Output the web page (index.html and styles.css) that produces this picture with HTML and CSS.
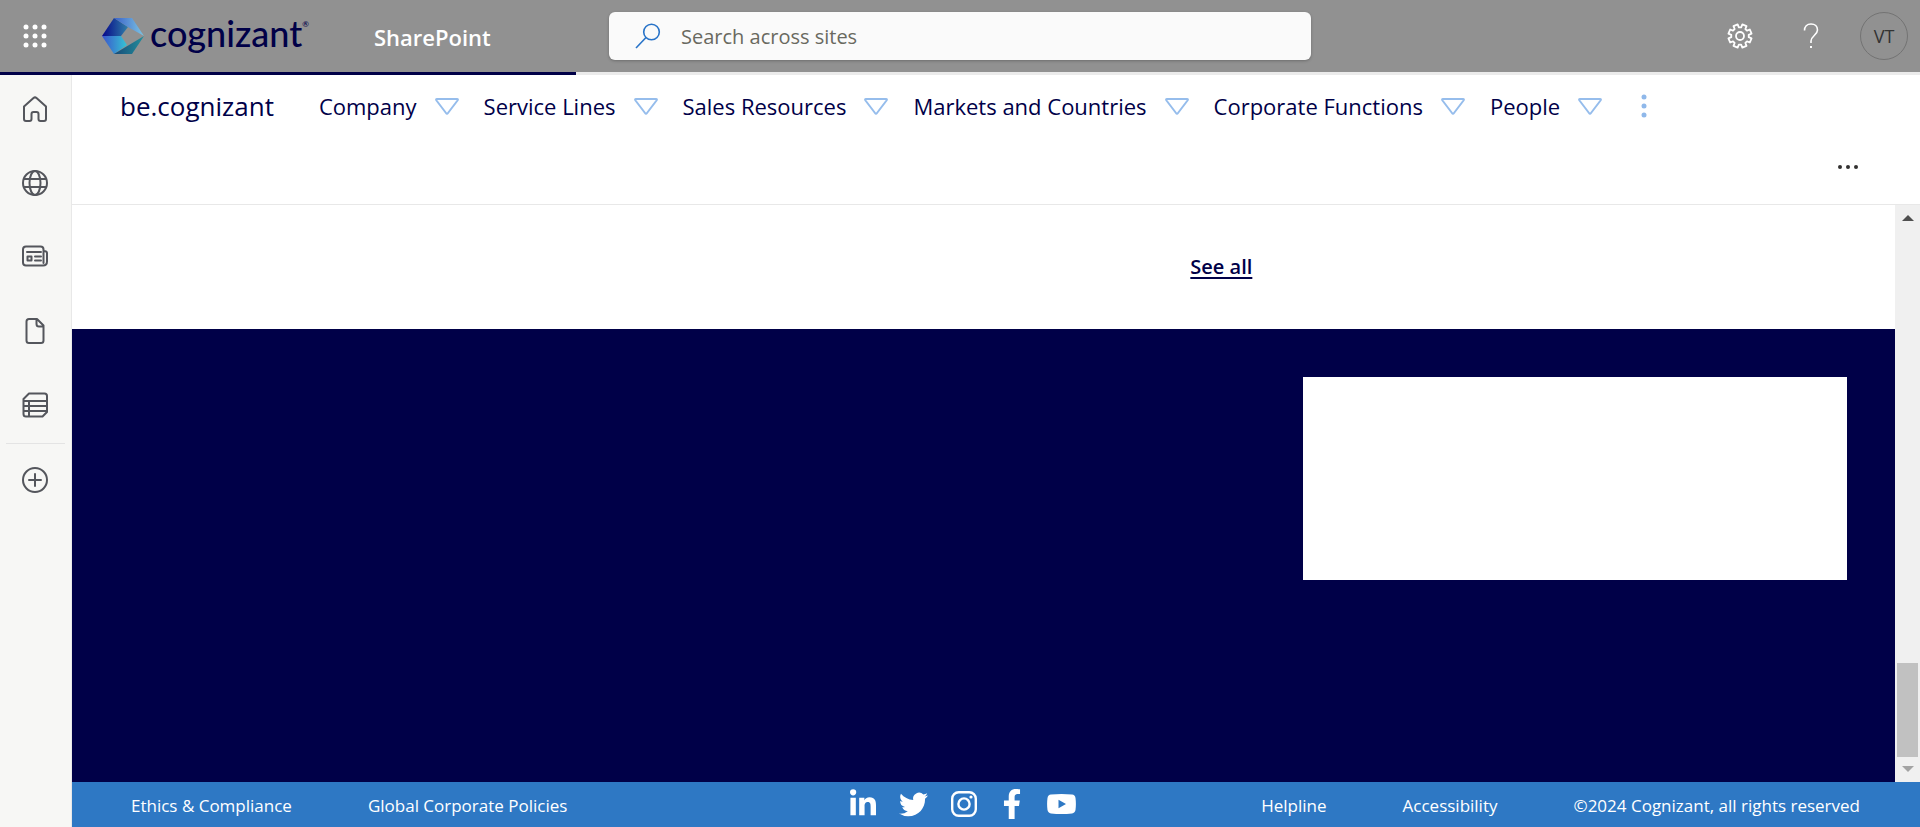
FILE: index.html
```html
<!DOCTYPE html>
<html lang="en">
<head>
<meta charset="utf-8">
<title>be.cognizant</title>
<link rel="stylesheet" href="styles.css">
</head>
<body>
<header class="suite">
  <button class="waffle" aria-label="App launcher"><svg width="24" height="24" viewBox="0 0 24 24" fill="currentColor"><circle cx="3" cy="3" r="2.5"/><circle cx="12" cy="3" r="2.5"/><circle cx="21" cy="3" r="2.5"/><circle cx="3" cy="12" r="2.5"/><circle cx="12" cy="12" r="2.5"/><circle cx="21" cy="12" r="2.5"/><circle cx="3" cy="21" r="2.5"/><circle cx="12" cy="21" r="2.5"/><circle cx="21" cy="21" r="2.5"/></svg></button>
  <a class="logo" href="#">
    <svg width="44" height="38" viewBox="0 0 44 38">
      <defs>
        <linearGradient id="a"><stop offset="0" stop-color="#06068a"/><stop offset="1" stop-color="#2f7fa8"/></linearGradient>
        <linearGradient id="b"><stop offset="0" stop-color="#3a62c8"/><stop offset="1" stop-color="#7cc4e4"/></linearGradient>
        <linearGradient id="c"><stop offset="0" stop-color="#3b55cc"/><stop offset="1" stop-color="#35c4d4"/></linearGradient>
        <linearGradient id="d"><stop offset="0" stop-color="#174a78"/><stop offset="1" stop-color="#238f9c"/></linearGradient>
      </defs>
      <path fill="url(#a)" d="M1 19 13 1 27 10 20 19z"/>
      <path fill="url(#b)" d="M13 1H31L43 19 27 10z"/>
      <path fill="url(#c)" d="M1 19H20L26 28 13 37z"/>
      <path fill="url(#d)" d="M13 37 43 19 31 37z"/>
    </svg>
    <span class="wordmark">cognizant<sup>®</sup></span>
  </a>
  <a class="product" href="#">SharePoint</a>
  <label class="search">
    <svg width="26" height="26" viewBox="0 0 26 26" fill="none" stroke="#2873c8" stroke-width="1.6"><circle cx="16.500" cy="9" r="7.800"/><path d="M11 14.500 1 25"/></svg>
    <input type="search" aria-label="Search across sites" placeholder="Search across sites">
  </label>
  <div class="tools">
    <button aria-label="Settings"><svg width="26" height="26" viewBox="-13 -13 26 26" fill="none" stroke="currentColor" stroke-width="1.800" stroke-linejoin="round"><circle r="4"/><path id="gear" d=""/></svg></button>
    <button aria-label="Help"><svg width="16" height="26" viewBox="0 0 16 26" fill="none" stroke="currentColor" stroke-width="1.600"><path d="M1.500 7.500C1.500 3.500 4 1 8 1s6.500 2.500 6.500 6c0 5-6.500 6-6.500 11v2"/><path d="M8 23v2" stroke-width="2"/></svg></button>
    <button class="avatar">VT</button>
  </div>
</header>
<div class="progress"><div class="progress-fill"></div></div>
<div class="shell">
  <nav class="rail" aria-label="App bar">
    <a href="#" aria-label="Home"><svg viewBox="0 0 26 26"><path d="M2 10.500 11.500 2q1.500-1.200 3 0L24 10.500V23q0 2-2 2h-3.500q-2 0-2-2v-5q0-2-2-2h-3q-2 0-2 2v5q0 2-2 2H4q-2 0-2-2z"/></svg></a>
    <a href="#" aria-label="Sites"><svg viewBox="0 0 26 26"><circle cx="13" cy="13" r="12"/><ellipse cx="13" cy="13" rx="5.500" ry="12"/><path d="M2 9h22M2 17h22"/></svg></a>
    <a href="#" aria-label="News"><svg viewBox="0 0 26 26"><path d="M21.500 19V5.500q0-3-3-3H4q-3 0-3 3v13q0 3 3 3h17q4 0 4-4V9q0-2-3.500-2M5 8h14M13 12.500h6M13 16.500h6M5.500 12.500h4v4h-4z"/></svg></a>
    <a href="#" aria-label="Files"><svg viewBox="0 0 26 26"><path d="M15 1H7Q4.500 1 4.500 3.500v19Q4.500 25 7 25h12q2.500 0 2.500-2.500V7.500zM14.500 1v5q0 2.500 2.500 2.500h4.500"/></svg></a>
    <a href="#" aria-label="Lists"><svg viewBox="0 0 26 26"><path d="M7 1.500h15.500Q25 1.500 25 4v16l-4.500 4.500H4Q1.500 24.500 1.500 22V7zM1.500 9H25M1.500 14H25M1.500 19H25M7 9v15.500"/></svg></a>
    <hr>
    <a href="#" aria-label="Create"><svg viewBox="0 0 26 26"><circle cx="13" cy="13" r="12"/><path d="M13 7v12M7 13h12"/></svg></a>
  </nav>
  <div class="page">
    <nav class="hub" aria-label="Hub">
      <a class="hub-title" href="#">be.cognizant</a>
      <button>Company <svg class="tri" viewBox="0 0 24 17"><path d="M2 1H22Q23.500 1 22.500 2.500L13 15Q12 16.500 11 15L1.500 2.500Q.500 1 2 1z"/></svg></button>
      <button>Service Lines <svg class="tri" viewBox="0 0 24 17"><path d="M2 1H22Q23.500 1 22.500 2.500L13 15Q12 16.500 11 15L1.500 2.500Q.500 1 2 1z"/></svg></button>
      <button>Sales Resources <svg class="tri" viewBox="0 0 24 17"><path d="M2 1H22Q23.500 1 22.500 2.500L13 15Q12 16.500 11 15L1.500 2.500Q.500 1 2 1z"/></svg></button>
      <button>Markets and Countries <svg class="tri" viewBox="0 0 24 17"><path d="M2 1H22Q23.500 1 22.500 2.500L13 15Q12 16.500 11 15L1.500 2.500Q.500 1 2 1z"/></svg></button>
      <button>Corporate Functions <svg class="tri" viewBox="0 0 24 17"><path d="M2 1H22Q23.500 1 22.500 2.500L13 15Q12 16.500 11 15L1.500 2.500Q.500 1 2 1z"/></svg></button>
      <button>People <svg class="tri" viewBox="0 0 24 17"><path d="M2 1H22Q23.500 1 22.500 2.500L13 15Q12 16.500 11 15L1.500 2.500Q.500 1 2 1z"/></svg></button>
      <button class="hub-more" aria-label="More links"><svg width="6" height="24" viewBox="0 0 6 24" fill="#8fb8ea"><circle cx="3" cy="3" r="2.500"/><circle cx="3" cy="12" r="2.500"/><circle cx="3" cy="21" r="2.500"/></svg></button>
    </nav>
    <div class="commands"><button aria-label="More actions"><svg width="20" height="6" viewBox="0 0 20 6" fill="#323130"><circle cx="2" cy="3" r="2"/><circle cx="10" cy="3" r="2"/><circle cx="18" cy="3" r="2"/></svg></button></div>
    <div class="viewport">
      <main class="content">
        <section class="columns news"><div class="wide"><a href="#">See all</a></div></section>
        <section class="columns band"><div class="card"></div></section>
      </main>
      <div class="scrollbar" aria-hidden="true">
        <svg width="12" height="6" viewBox="0 0 12 6" fill="#4f4f4f"><path d="M6 0 12 6H0z"/></svg>
        <div class="thumb"></div>
        <svg width="12" height="6" viewBox="0 0 12 6" fill="#a3a3a3"><path d="M0 0H12L6 6z"/></svg>
      </div>
    </div>
    <footer class="footer">
      <div class="links"><a href="#">Ethics &amp; Compliance</a><a href="#">Global Corporate Policies</a></div>
      <div class="social">
        <a href="#" aria-label="LinkedIn"><svg width="26" height="30" viewBox="0 0 448 512"><path d="M100.280 448H7.400V148.900h92.880zM53.790 108.100C24.090 108.100 0 83.500 0 53.800a53.790 53.790 0 0 1 107.580 0c0 29.700-24.100 54.300-53.790 54.300zM447.900 448h-92.680V302.400c0-34.700-.7-79.200-48.290-79.200-48.290 0-55.690 37.700-55.690 76.700V448h-92.780V148.900h89.080v40.800h1.300c12.400-23.500 42.690-48.300 87.880-48.300 94 0 111.280 61.900 111.280 142.300V448z"/></svg></a>
        <a href="#" aria-label="Twitter"><svg width="29" height="29" viewBox="0 0 24 24"><path d="M23.953 4.57a10 10 0 01-2.825.775 4.958 4.958 0 002.163-2.723c-.951.555-2.005.959-3.127 1.184a4.92 4.92 0 00-8.384 4.482C7.69 8.095 4.067 6.13 1.64 3.162a4.822 4.822 0 00-.666 2.475c0 1.71.87 3.213 2.188 4.096a4.904 4.904 0 01-2.228-.616v.06a4.923 4.923 0 003.946 4.827 4.996 4.996 0 01-2.212.085 4.936 4.936 0 004.604 3.417 9.867 9.867 0 01-6.102 2.105c-.39 0-.779-.023-1.17-.067a13.995 13.995 0 007.557 2.209c9.053 0 13.998-7.496 13.998-13.985 0-.21 0-.42-.015-.63A9.935 9.935 0 0024 4.59z"/></svg></a>
        <a href="#" aria-label="Instagram"><svg width="26" height="26" viewBox="0 0 26 26"><g fill="none" stroke="#fff" stroke-width="2.400"><rect x="1.200" y="1.200" width="23.600" height="23.600" rx="6.500"/><circle cx="13" cy="13" r="5.600"/></g><circle cx="20" cy="6" r="1.600"/></svg></a>
        <a href="#" aria-label="Facebook"><svg width="24" height="30" viewBox="0 0 320 512"><path d="M279.140 288l14.220-92.660h-88.910v-60.130c0-25.350 12.420-50.060 52.240-50.060h40.420V6.260S260.430 0 225.360 0c-73.220 0-121.080 44.380-121.080 124.720v70.620H22.890V288h81.390v224h100.170V288z"/></svg></a>
        <a href="#" aria-label="YouTube"><svg width="29" height="20" viewBox="0 0 29 20"><path fill-rule="evenodd" d="M4 .600Q14.500-.500 25 .600 28 1 28.500 4 29.300 10 28.500 16 28 19 25 19.400 14.500 20.500 4 19.400 1 19 .500 16-.300 10 .500 4 1 1 4 .600zM11.500 5.800V14.200L19 10z"/></svg></a>
      </div>
      <div class="links end"><a href="#">Helpline</a><a href="#">Accessibility</a><span>©2024 Cognizant, all rights reserved</span></div>
    </footer>
  </div>
</div>
<script src="gear.js"></script>
</body>
</html>
```
FILE: gear.js
```js
// Builds the outline of the eight-toothed settings gear.
const pts = [];
for (let i = 0; i < 8; i++) {
  const mid = i * 45 + 22.5;
  for (const [offset, radius] of [[-15, 8.8], [-11, 11.8], [11, 11.8], [15, 8.8]]) {
    const t = (mid + offset) * Math.PI / 180;
    pts.push((radius * Math.cos(t)).toFixed(2) + " " + (radius * Math.sin(t)).toFixed(2));
  }
}
document.getElementById("gear").setAttribute("d", "M" + pts.join("L") + "z");
```
FILE: styles.css
```css
* { box-sizing: border-box; }
body { margin: 0; min-height: 100vh; display: flex; flex-direction: column; background: #fff; color: #000048; font-family: "Open Sans", "Noto Sans", sans-serif; }
a { color: inherit; text-decoration: none; }
button { margin: 0; padding: 0; border: 0; background: none; color: inherit; font: inherit; display: flex; align-items: center; cursor: pointer; }
svg { display: block; flex: none; }

.suite { height: 72px; display: grid; grid-template-columns: 72px 302px 235px minmax(200px, 702px) 1fr; align-items: center; background: #919191; color: #fff; }
.waffle { padding-left: 23px; }
.logo { padding-left: 29px; display: flex; align-items: center; gap: 5px; color: #000048; }
.wordmark { font-family: Lato, sans-serif; font-size: 36px; font-weight: 500; line-height: 40px; padding-bottom: 6px; white-space: nowrap; }
.wordmark sup { font-size: 8px; line-height: 8px; vertical-align: 20px; }
.product { font-size: 22px; font-weight: 600; line-height: 32px; padding-top: 2px; }
.search { height: 48px; display: flex; align-items: center; gap: 20px; padding: 0 26px; background: #fafafa; border-radius: 6px; box-shadow: 0 1px 3px rgba(0, 0, 0, .25); }
.search input { flex: 1; min-width: 0; border: 0; outline: 0; background: none; font: inherit; font-size: 20px; line-height: 30px; padding: 2px 0 0; }
.search input::placeholder { color: #69695f; opacity: 1; }
.tools { display: flex; justify-content: flex-end; align-items: center; padding-right: 12px; }
.tools button:first-child { margin-right: 50px; }
.avatar { width: 48px; height: 48px; margin-left: 41px; justify-content: center; border: 1px solid #737373; border-radius: 50%; color: #333; font-size: 18px; }

.progress { height: 3px; background: #ebebeb; }
.progress-fill { width: 30%; height: 3px; background: #000048; }

.shell { flex: 1; display: flex; }
.rail { width: 72px; flex: none; display: flex; flex-direction: column; padding: 21px 1px 0 0; background: #f7f7f5; border-right: 1px solid #e8e8e8; }
.rail a { display: flex; justify-content: center; padding-bottom: 48px; }
.rail svg { width: 26px; height: 26px; fill: none; stroke: #54565c; stroke-width: 2; stroke-linejoin: round; stroke-linecap: round; }
.rail hr { width: 59px; height: 1px; margin: -23px auto 23px 6px; border: 0; background: #e4e4e4; }

.page { flex: 1; min-width: 0; display: flex; flex-direction: column; }
.hub { display: flex; align-items: center; gap: 25px; padding: 14px 48px 0; font-size: 22px; line-height: 34px; white-space: nowrap; }
.hub button { gap: 18px; }
.hub-title { font-size: 26px; margin-right: 20px; }
.tri { width: 24px; height: 17px; fill: none; stroke: #96bdec; stroke-width: 2; }
.hub .hub-more { margin-left: 14px; }
.commands { display: flex; justify-content: flex-end; padding: 41px 62px 34px; border-bottom: 1px solid #e8e8e8; }
.viewport { flex: 1; display: flex; }
.content { flex: 1; display: flex; flex-direction: column; }
.columns { display: grid; grid-template-columns: repeat(3, 1fr); gap: 48px; padding: 48px; }
.wide { grid-column: span 2; padding-right: 3px; text-align: right; font-size: 20px; font-weight: 600; line-height: 28px; }
.wide a { text-decoration: underline; text-decoration-thickness: 2px; text-underline-offset: 3px; }
.band { flex: 1; background: #000048; align-items: start; }
.card { grid-column: 3; min-height: 203px; background: #fff; }
.scrollbar { width: 25px; display: flex; flex-direction: column; align-items: center; padding: 10px 0; background: #f0f0f0; }
.thumb { width: 21px; height: 94px; margin: auto 0 9px; background: #c1c1c1; }

.footer { height: 45px; display: grid; grid-template-columns: 1fr auto 1fr; align-items: center; padding: 0 60px 0 59px; background: #2e78c4; color: #fff; font-size: 17px; line-height: 24px; white-space: nowrap; }
.links { display: flex; gap: 76px; padding-top: 2px; }
.end { justify-content: flex-end; }
.social { display: flex; align-items: center; gap: 23px; padding: 0 65px 1px 0; }
.social svg { fill: #fff; }
```
